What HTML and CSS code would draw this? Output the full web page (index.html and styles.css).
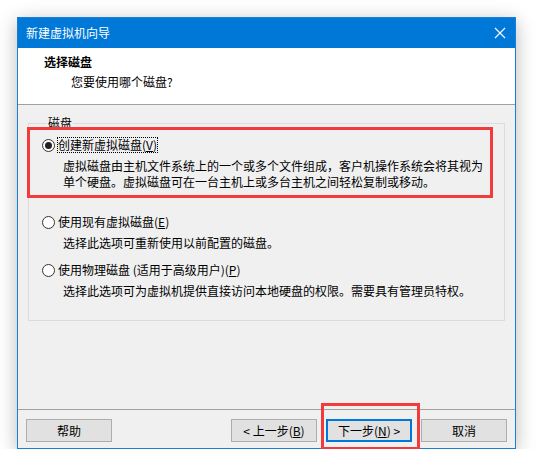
FILE: index.html
```html
<!DOCTYPE html>
<html lang="zh-CN">
<head>
<meta charset="utf-8">
<title>新建虚拟机向导</title>
<link rel="stylesheet" href="styles.css">
</head>
<body>
<div class="window">
  <div class="titlebar">
    <span class="title">新建虚拟机向导</span>
    <svg class="close" width="12" height="12" viewBox="0 0 12 12"><path d="M1 1 L11 11 M11 1 L1 11" stroke="#fff" stroke-width="1.1" fill="none"/></svg>
  </div>
  <div class="header">
    <div class="h-title">选择磁盘</div>
    <div class="h-sub">您要使用哪个磁盘?</div>
  </div>
  <div class="content">
    <fieldset class="group">
      <legend class="legend">磁盘</legend>
      <div class="option opt1">
        <div class="row">
          <svg class="radio" width="13" height="13" viewBox="0 0 13 13"><circle cx="6.5" cy="6.5" r="6" fill="#fff" stroke="#333"/><circle cx="6.5" cy="6.5" r="3.5" fill="#222"/></svg>
          <span class="label focus">创建新虚拟磁盘(<u>V</u>)</span>
        </div>
        <div class="desc">虚拟磁盘由主机文件系统上的一个或多个文件组成，客户机操作系统会将其视为<br>单个硬盘。虚拟磁盘可在一台主机上或多台主机之间轻松复制或移动。</div>
      </div>
      <div class="option opt2">
        <div class="row">
          <svg class="radio" width="13" height="13" viewBox="0 0 13 13"><circle cx="6.5" cy="6.5" r="6" fill="#fff" stroke="#333"/></svg>
          <span class="label">使用现有虚拟磁盘(<u>E</u>)</span>
        </div>
        <div class="desc">选择此选项可重新使用以前配置的磁盘。</div>
      </div>
      <div class="option opt3">
        <div class="row">
          <svg class="radio" width="13" height="13" viewBox="0 0 13 13"><circle cx="6.5" cy="6.5" r="6" fill="#fff" stroke="#333"/></svg>
          <span class="label">使用物理磁盘 (适用于高级用户)(<u>P</u>)</span>
        </div>
        <div class="desc">选择此选项可为虚拟机提供直接访问本地硬盘的权限。需要具有管理员特权。</div>
      </div>
    </fieldset>
  </div>
  <div class="footer">
    <button class="btn">帮助</button>
    <div class="spacer"></div>
    <button class="btn">&lt; 上一步(<u>B</u>)</button>
    <button class="btn default">下一步(<u>N</u>) &gt;</button>
    <button class="btn">取消</button>
  </div>
  <div class="mark mark1"></div>
  <div class="mark mark2"></div>
</div>
</body>
</html>
```

FILE: styles.css
```css
html, body {
  margin: 0;
  padding: 0;
  background: #ffffff;
}
body {
  font-family: "Noto Sans CJK SC", "Noto Sans", sans-serif;
  font-size: 12px;
  line-height: 16px;
  color: #000;
  padding: 17px 0 0 17px;
}
.window {
  position: relative;
  width: 497px;
  height: 430px;
  border: 1px solid #1a7fd6;
  background: #f0f0f0;
  display: flex;
  flex-direction: column;
  box-shadow: 0 4px 18px rgba(0, 0, 0, 0.28);
}
.titlebar {
  height: 30px;
  background: #0078d7;
  display: flex;
  align-items: center;
  padding: 0 9px 0 8px;
  color: #fff;
  flex: none;
}
.title {
  flex: 1;
  padding-top: 0px;
}
.close {
  margin-right: 0px;
}
.header {
  height: 56px;
  background: #fff;
  border-bottom: 1px solid #a0a0a0;
  padding: 6px 0 0 26px;
  box-sizing: border-box;
  height: 57px;
  flex: none;
}
.h-title {
  font-weight: bold;
}
.h-sub {
  margin-top: 4px;
  margin-left: 27px;
}
.content {
  height: 304px;
  border-bottom: 1px solid #a0a0a0;
  box-sizing: content-box;
  padding: 10px 10px 0 10px;
  box-sizing: border-box;
  height: 305px;
  flex: none;
}
.group {
  margin: 0;
  padding: 0 0 0 13px;
  border: 1px solid #dcdcdc;
  height: 206px;
  box-sizing: border-box;
  min-width: 0;
}
.legend {
  padding: 0 1px;
  margin-left: 5px;
  line-height: 16px;
}
.option {
  display: flex;
  flex-direction: column;
}
.opt1 { margin-top: 6px; }
.opt2 { margin-top: 24px; }
.opt3 { margin-top: 11px; }
.row {
  display: flex;
  align-items: center;
  height: 16px;
}
.radio {
  flex: none;
}
.label {
  margin-left: 2px;
  padding: 0 1px;
}
.focus {
  outline: 1px dotted #000;
  outline-offset: -1px;
}
.desc {
  margin-top: 5px;
  margin-left: 21px;
}
.footer {
  flex: 1;
  display: flex;
  align-items: flex-start;
  padding: 9px 8px 0 8px;
  gap: 9px;
}
.spacer {
  flex: 1;
}
.btn {
  width: 86px;
  height: 23px;
  background: #e1e1e1;
  border: 1px solid #adadad;
  font-family: "Noto Sans CJK SC", "Noto Sans", sans-serif;
  font-size: 12px;
  line-height: 16px;
  color: #000;
  padding: 0;
  margin: 0;
}
.btn.default {
  border: 2px solid #0078d7;
}
.mark {
  position: absolute;
  border: 3px solid #f23b3b;
  box-sizing: border-box;
  pointer-events: none;
}
.mark1 {
  left: 9px;
  top: 109px;
  width: 466px;
  height: 71px;
}
.mark2 {
  left: 303px;
  top: 385px;
  width: 99px;
  height: 47px;
}
```
